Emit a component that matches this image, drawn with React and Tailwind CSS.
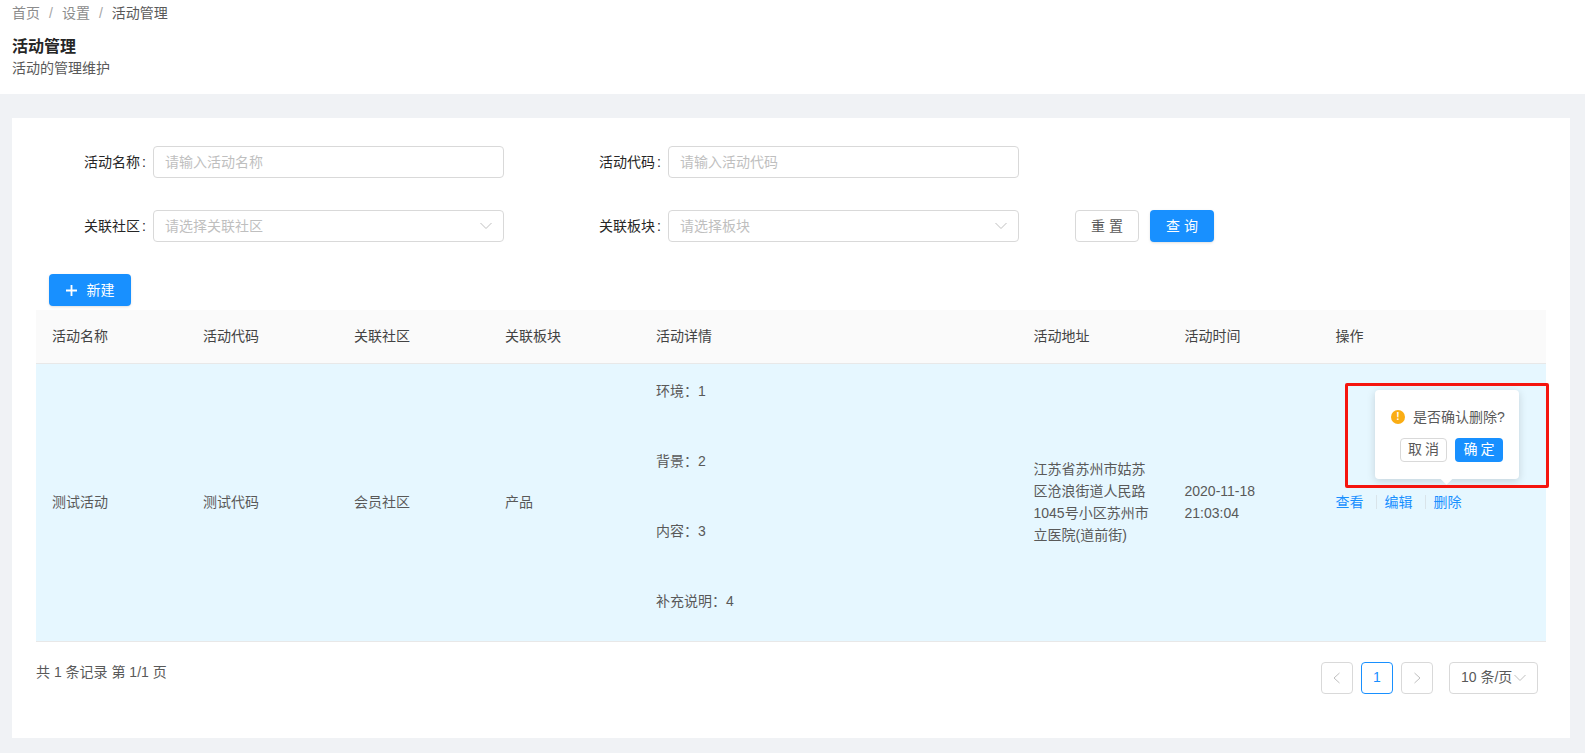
import React from "react";

const font = { fontFamily: '"Liberation Sans","Noto Sans CJK SC",sans-serif' };

function Chevron({ className }) {
  return (
    <svg viewBox="0 0 12 12" className={className} fill="none" stroke="currentColor" strokeWidth="1">
      <path d="M0.5 3 L6 8.5 L11.5 3" />
    </svg>
  );
}

function Field({ label, placeholder, select }) {
  return (
    <div className="flex items-center w-[515px] shrink-0">
      <label className="w-[117px] pr-[7px] text-right text-[14px] text-[#262626] whitespace-nowrap">{label}<span className="ml-[2px]">:</span></label>
      <div className="relative flex items-center w-[350.5px] h-[32px] rounded-[4px] border border-[#d9d9d9] bg-white px-[11px] text-[14px] text-[#bfbfbf]">
        {placeholder}
        {select && <Chevron className="absolute right-[11px] top-[9px] w-[12px] h-[12px] text-[#bfbfbf]" />}
      </div>
    </div>
  );
}

const cols = ["活动名称", "活动代码", "关联社区", "关联板块", "活动详情", "活动地址", "活动时间", "操作"];

export default function App() {
  return (
    <div className="h-[753px] overflow-hidden bg-[#f0f2f5] text-[14px] text-[#595959]" style={font}>
      <header className="h-[94px] bg-white px-[12px]">
        <nav className="flex items-center h-[26px] text-[14px] text-[#8c8c8c]">
          <span>首页</span>
          <span className="mx-[9px] text-[#a6a6a6]">/</span>
          <span>设置</span>
          <span className="mx-[9px] text-[#a6a6a6]">/</span>
          <span className="text-[#595959]">活动管理</span>
        </nav>
        <h1 className="mt-[9px] text-[16px] leading-[23px] font-bold text-[#262626]">活动管理</h1>
        <p className="text-[14px] leading-[20px] text-[#595959]">活动的管理维护</p>
      </header>

      <main className="pt-[24px] pl-[12px]">
        <section className="bg-white w-[1558px] h-[620px] pt-[28px] px-[24px]">
          <div className="flex h-[32px]">
            <Field label="活动名称" placeholder="请输入活动名称" />
            <Field label="活动代码" placeholder="请输入活动代码" />
          </div>
          <div className="flex items-center h-[32px] mt-[32px]">
            <Field label="关联社区" placeholder="请选择关联社区" select />
            <Field label="关联板块" placeholder="请选择板块" select />
            <button className="ml-[9px] w-[64px] h-[32px] pl-[4px] rounded-[4px] border border-[#d9d9d9] bg-white text-[14px] text-[#595959] tracking-[4px]">重置</button>
            <button className="ml-[11px] w-[64px] h-[32px] pl-[4px] rounded-[4px] bg-[#1890ff] text-[14px] text-white tracking-[4px] shadow-sm">查询</button>
          </div>
          <button className="flex items-center justify-center gap-[10px] mt-[32px] ml-[13px] w-[82px] h-[32px] rounded-[4px] bg-[#1890ff] text-[14px] text-white shadow-sm">
            <svg viewBox="0 0 12 12" className="w-[11px] h-[11px]" stroke="currentColor" strokeWidth="2"><path d="M6 0V12M0 6H12" /></svg>
            新建
          </button>

          <table className="mt-[4px] w-[1510px] table-fixed border-collapse">
            <colgroup>
              <col className="w-[151px]" /><col className="w-[151px]" /><col className="w-[151px]" /><col className="w-[151px]" />
              <col className="w-[377.5px]" /><col className="w-[151px]" /><col className="w-[151px]" /><col className="w-[226.5px]" />
            </colgroup>
            <thead>
              <tr className="h-[53px] bg-[#fafafa] border-b border-[#e8e8e8]">
                {cols.map((c) => (
                  <th key={c} className="px-[16px] text-left font-normal text-[#434343]">{c}</th>
                ))}
              </tr>
            </thead>
            <tbody>
              <tr className="h-[278px] bg-[#e6f7ff] border-b border-[#e8e8e8]">
                <td className="px-[16px]">测试活动</td>
                <td className="px-[16px]">测试代码</td>
                <td className="px-[16px]">会员社区</td>
                <td className="px-[16px]">产品</td>
                <td className="px-[16px] pb-[13px]">
                  <div className="flex flex-col gap-[48px] leading-[22px]">
                    <span>环境：1</span>
                    <span>背景：2</span>
                    <span>内容：3</span>
                    <span>补充说明：4</span>
                  </div>
                </td>
                <td className="px-[16px] leading-[22px]">江苏省苏州市姑苏区沧浪街道人民路1045号小区苏州市立医院(道前街)</td>
                <td className="px-[16px] leading-[22px]">2020-11-18 21:03:04</td>
                <td className="relative px-[16px]">
                  <div className="flex items-center text-[#1890ff]">
                    <span>查看</span>
                    <span className="ml-[12px] mr-[8px] w-px h-[14px] bg-[#d9e4ea]"></span>
                    <span>编辑</span>
                    <span className="ml-[12px] mr-[8px] w-px h-[14px] bg-[#d9e4ea]"></span>
                    <span>删除</span>
                  </div>

                  <div className="absolute left-[55.5px] top-[26px] w-[144px] h-[89px] rounded-[4px] bg-white shadow-[0_2px_8px_rgba(0,0,0,0.15)]">
                    <div className="flex items-center gap-[8px] pl-[16px] pt-[16px] leading-[22px] whitespace-nowrap">
                      <span className="flex items-center justify-center w-[14px] h-[14px] rounded-full bg-[#faad14] text-white text-[10px] font-bold leading-none">!</span>
                      <span>是否确认删除?</span>
                    </div>
                    <div className="flex justify-end gap-[8px] mt-[10px] pr-[16px]">
                      <button className="w-[47px] h-[24px] pl-[3px] rounded-[4px] border border-[#d9d9d9] bg-white text-[14px] text-[#595959] tracking-[3px]">取消</button>
                      <button className="w-[48px] h-[24px] pl-[3px] rounded-[4px] bg-[#1890ff] text-[14px] text-white tracking-[3px]">确定</button>
                    </div>
                    <span className="absolute left-[67px] bottom-[-4px] w-[9px] h-[9px] rotate-45 bg-white"></span>
                  </div>
                  <div className="absolute left-[25px] top-[19.5px] w-[204px] h-[105px] rounded-[2px] border-[3px] border-[#f5150f] pointer-events-none"></div>
                </td>
              </tr>
            </tbody>
          </table>

          <div className="flex justify-between mt-[20px]">
            <span className="text-[14px] text-[#595959]">共 1 条记录 第 1/1 页</span>
            <div className="flex items-center mr-[8px]">
              <span className="flex items-center justify-center w-[32px] h-[32px] rounded-[4px] border border-[#d9d9d9] text-[#bfbfbf]">
                <svg viewBox="0 0 12 12" className="w-[12px] h-[12px]" fill="none" stroke="currentColor"><path d="M8.5 1 L3 6 L8.5 11" /></svg>
              </span>
              <span className="flex items-center justify-center ml-[8px] w-[32px] h-[32px] rounded-[4px] border border-[#1890ff] text-[#1890ff]">1</span>
              <span className="flex items-center justify-center ml-[8px] w-[32px] h-[32px] rounded-[4px] border border-[#d9d9d9] text-[#bfbfbf]">
                <svg viewBox="0 0 12 12" className="w-[12px] h-[12px]" fill="none" stroke="currentColor"><path d="M3.5 1 L9 6 L3.5 11" /></svg>
              </span>
              <span className="flex items-center gap-[2px] ml-[16px] w-[89px] h-[32px] rounded-[4px] border border-[#d9d9d9] pl-[11px] whitespace-nowrap text-[#595959]">
                10 条/页
                <Chevron className="w-[12px] h-[12px] shrink-0 text-[#bfbfbf]" />
              </span>
            </div>
          </div>
        </section>
      </main>
    </div>
  );
}
